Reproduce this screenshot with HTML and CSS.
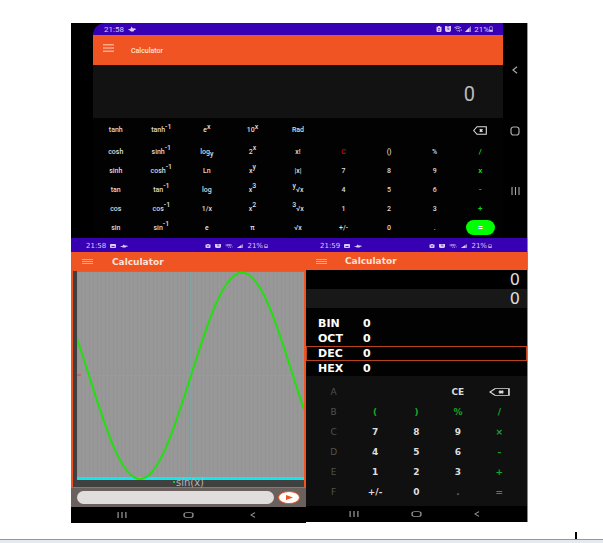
FILE: index.html
```html
<!DOCTYPE html>
<html lang="en">
<head>
<meta charset="utf-8">
<title>Calculator</title>
<link rel="stylesheet" href="styles.css">
</head>
<body>
<svg class="defs" aria-hidden="true">
  <symbol id="menu" viewBox="0 0 12 8" preserveAspectRatio="none"><path d="M0 .8h12M0 4h12M0 7.2h12" stroke="currentColor" stroke-width="1.5"/></symbol>
  <symbol id="cloud" viewBox="0 0 8 6" preserveAspectRatio="none"><path d="M0 3.8Q1 2.6 2.2 3.2L3.6.6 4.8 2.4 7 2.2 8 3.6 6 4.2 5.6 5.4H2.8L2 4.4z" fill="currentColor"/></symbol>
  <symbol id="image" viewBox="0 0 7 6" preserveAspectRatio="none"><path d="M1 0h5q1 0 1 1v4q0 1-1 1H1Q0 6 0 5V1Q0 0 1 0zM1.2 4.5h4.6L4.5 2.8l-1 .9-.9-.6z" fill="currentColor" fill-rule="evenodd"/></symbol>
  <symbol id="recycle" viewBox="0 0 6 6" preserveAspectRatio="none"><path d="M2 0h2v.8h1.5v4.4L4.8 6H1.2l-.7-.8V.8H2zM2.2 2v.8h1.6V2zM2 3.8v.7h2v-.7z" fill="currentColor" fill-rule="evenodd"/></symbol>
  <symbol id="alarm" viewBox="0 0 6 6" preserveAspectRatio="none"><path d="M0 0h1.5l.5.5h2L4.500 0H6v4.500L5 6H1L0 4.500zM2.600 1.500v2h1.900v-.7H3.300V1.500z" fill="currentColor" fill-rule="evenodd"/></symbol>
  <symbol id="wifi" viewBox="0 0 8 6" preserveAspectRatio="none"><path d="M.4 1.700Q3.600-.6 7 1.700M1.500 3Q3.700 1.300 5.700 3M2.800 4.200l1 1 .8-1M5.500 4.300v1.500M7.200 3.500v1.500" fill="none" stroke="currentColor" stroke-width=".8"/></symbol>
  <symbol id="signal" viewBox="0 0 6 6" preserveAspectRatio="none"><path d="M0 6 6 0v6z" fill="currentColor" opacity=".65"/><path d="M0 6 4 2v4z" fill="currentColor"/></symbol>
  <symbol id="battery" viewBox="0 0 4 6" preserveAspectRatio="none"><path d="M1.300.3h1.400v.8h.8v4.500h-3V1.100h.8z" fill="none" stroke="currentColor" stroke-width=".5"/><path d="M.5 3.800h3v1.800h-3z" fill="currentColor"/></symbol>
  <symbol id="erase" viewBox="0 0 14 9" preserveAspectRatio="none"><path d="M4 .7h9.300v7.600H4L.7 4.500z" fill="none" stroke="currentColor" stroke-width="1.100"/><path d="M6.800 3.200l2.600 2.600M6.800 5.800l2.600-2.600" stroke="currentColor" stroke-width="1.500"/></symbol>
  <symbol id="back" viewBox="0 0 6 8" preserveAspectRatio="none"><path d="M5 .8 1 4l4 3.200" fill="none" stroke="currentColor" stroke-width="1.200"/></symbol>
  <symbol id="home" viewBox="0 0 10 10" preserveAspectRatio="none"><rect x="1" y="1" width="8" height="8" rx="2.500" fill="none" stroke="currentColor" stroke-width="1.200"/></symbol>
  <symbol id="recent" viewBox="0 0 9 8" preserveAspectRatio="none"><path d="M1 0v8M4.500 0v8M8 0v8" stroke="currentColor" stroke-width="1.100"/></symbol>
</svg>

<main class="collage">
  <section class="wide">
    <div class="screen">
      <div class="status">
        <span>21:58</span><svg class="ic w8"><use href="#cloud"/></svg>
        <span class="tray"><svg class="ic w6"><use href="#recycle"/></svg><svg class="ic w6"><use href="#alarm"/></svg><svg class="ic w8"><use href="#wifi"/></svg><svg class="ic w6"><use href="#signal"/></svg><span>21%</span><svg class="ic w4"><use href="#battery"/></svg></span>
      </div>
      <header class="bar"><button class="menu" aria-label="Menu"><svg><use href="#menu"/></svg></button><h1>Calculator</h1></header>
      <output class="result">0</output>
      <div class="keys">
        <button>tanh</button><button>tanh<sup>-1</sup></button><button><i>e</i><sup>x</sup></button><button>10<sup>x</sup></button><button>Rad</button><span></span><span></span><span></span><button aria-label="Delete"><svg class="erase"><use href="#erase"/></svg></button>
        <button>cosh</button><button>sinh<sup>-1</sup></button><button>log<sub>y</sub></button><button>2<sup>x</sup></button><button>x!</button><button class="red">C</button><button>()</button><button>%</button><button class="op">/</button>
        <button>sinh</button><button>cosh<sup>-1</sup></button><button>Ln</button><button>x<sup>y</sup></button><button>|x|</button><button>7</button><button>8</button><button>9</button><button class="op">x</button>
        <button>tan</button><button>tan<sup>-1</sup></button><button>log</button><button>x<sup>3</sup></button><button><sup>y</sup>√x</button><button>4</button><button>5</button><button>6</button><button class="op">-</button>
        <button>cos</button><button>cos<sup>-1</sup></button><button>1/x</button><button>x<sup>2</sup></button><button><sup>3</sup>√x</button><button>1</button><button>2</button><button>3</button><button class="op">+</button>
        <button>sin</button><button>sin<sup>-1</sup></button><button class="euler">e</button><button>π</button><button>√x</button><button>+/-</button><button>0</button><button>.</button><button class="equals">=</button>
      </div>
    </div>
    <nav class="side">
      <button aria-label="Back"><svg class="back"><use href="#back"/></svg></button>
      <button aria-label="Home"><svg class="home"><use href="#home"/></svg></button>
      <button aria-label="Recent apps"><svg class="recent"><use href="#recent"/></svg></button>
    </nav>
  </section>

  <div class="pair">
    <section class="phone">
      <div class="status">
        <span>21:58</span><svg class="ic w6"><use href="#image"/></svg><svg class="ic w8"><use href="#cloud"/></svg>
        <span class="tray"><svg class="ic w6"><use href="#recycle"/></svg><svg class="ic w6"><use href="#alarm"/></svg><svg class="ic w8"><use href="#wifi"/></svg><svg class="ic w6"><use href="#signal"/></svg><span>21%</span><svg class="ic w4"><use href="#battery"/></svg></span>
      </div>
      <header class="bar"><button class="menu" aria-label="Menu"><svg><use href="#menu"/></svg></button><h1>Calculator</h1></header>
      <figure class="graph">
        <svg class="plot" viewBox="0 0 227 209" preserveAspectRatio="none" role="img" aria-label="Sine curve">
          <defs><pattern id="rules" width="4" height="209" patternUnits="userSpaceOnUse"><path d="M.5 0v209" stroke="#949494" stroke-width="1"/></pattern></defs>
          <rect width="227" height="209" fill="#989898"/>
          <rect width="227" height="209" fill="url(#rules)"/>
          <path d="M113.500 0v209M0 104.500h227" stroke="#84a4a4" stroke-width="1"/>
          <path d="M0 .5h227" stroke="#708888" stroke-width="1"/>
          <path d="M0 104h4" stroke="#c66" stroke-width="2"/>
          <path d="M0 207.500h227" stroke="#14e6f0" stroke-width="3"/>
          <path d="M-39 1.500C-20.500 1.500-4.600 51.800 12 104.500C28.600 157.200 44.500 208 63 208C81.500 208 97.400 157.200 114 104.500C130.600 51.800 146.500 1.500 165 1.500C183.500 1.500 199.400 51.800 216 104.500C232.600 157.200 248.500 208 267 208" fill="none" stroke="#22e00f" stroke-width="2"/>
        </svg>
        <figcaption><span class="dot"></span>sin(x)</figcaption>
      </figure>
      <form class="entry">
        <input type="text" aria-label="Function">
        <button type="button" aria-label="Plot"><svg viewBox="0 0 8 6" preserveAspectRatio="none"><path d="M0 0 8 3 0 6z" fill="#f05423"/></svg></button>
      </form>
      <nav class="bottom">
        <button aria-label="Recent apps"><svg class="recent"><use href="#recent"/></svg></button>
        <button aria-label="Home"><svg class="home"><use href="#home"/></svg></button>
        <button aria-label="Back"><svg class="back"><use href="#back"/></svg></button>
      </nav>
    </section>

    <section class="phone programmer">
      <div class="status">
        <span>21:59</span><svg class="ic w6"><use href="#image"/></svg><svg class="ic w8"><use href="#cloud"/></svg>
        <span class="tray"><svg class="ic w6"><use href="#recycle"/></svg><svg class="ic w6"><use href="#alarm"/></svg><svg class="ic w8"><use href="#wifi"/></svg><svg class="ic w6"><use href="#signal"/></svg><span>21%</span><svg class="ic w4"><use href="#battery"/></svg></span>
      </div>
      <header class="bar"><button class="menu" aria-label="Menu"><svg><use href="#menu"/></svg></button><h1>Calculator</h1></header>
      <output class="line">0</output>
      <output class="line current">0</output>
      <dl class="bases">
        <div><dt>BIN</dt><dd>0</dd></div>
        <div><dt>OCT</dt><dd>0</dd></div>
        <div class="active"><dt>DEC</dt><dd>0</dd></div>
        <div><dt>HEX</dt><dd>0</dd></div>
      </dl>
      <div class="pad">
        <button disabled>A</button><span></span><span></span><button>CE</button><button aria-label="Delete"><svg class="erase"><use href="#erase"/></svg></button>
        <button disabled>B</button><button class="op">(</button><button class="op">)</button><button class="op">%</button><button class="op">/</button>
        <button disabled>C</button><button>7</button><button>8</button><button>9</button><button class="op">×</button>
        <button disabled>D</button><button>4</button><button>5</button><button>6</button><button class="op">-</button>
        <button disabled>E</button><button>1</button><button>2</button><button>3</button><button class="op">+</button>
        <button disabled>F</button><button>+/-</button><button>0</button><button class="faint">.</button><button class="op">=</button>
      </div>
      <nav class="bottom">
        <button aria-label="Recent apps"><svg class="recent"><use href="#recent"/></svg></button>
        <button aria-label="Home"><svg class="home"><use href="#home"/></svg></button>
        <button aria-label="Back"><svg class="back"><use href="#back"/></svg></button>
      </nav>
    </section>
  </div>
</main>
<footer class="edge"><span class="caret"></span></footer>
</body>
</html>
```
FILE: styles.css
```css
* { box-sizing: border-box; }
body {
  margin: 0;
  min-height: 100vh;
  display: flex;
  flex-direction: column;
  background: #fff;
  color: #ddd;
  font-family: Roboto, sans-serif;
}
.defs { position: absolute; width: 0; height: 0; }
button {
  margin: 0;
  padding: 0;
  border: 0;
  background: none;
  color: inherit;
  font: inherit;
  display: flex;
  align-items: center;
  justify-content: center;
}
svg { display: block; }
h1 { margin: 0; font-weight: 500; }
.collage { padding: 23px 75px 0 71px; }

.status {
  display: flex;
  align-items: center;
  gap: 4px;
  background: #3700b3;
  color: #d8cef4;
}
.tray { margin-left: auto; display: flex; align-items: center; gap: 4px; }
.ic { height: 6px; }
.w4 { width: 4px; margin-left: -3px; }
.w6 { width: 6px; }
.w8 { width: 8px; }
.bar { display: flex; align-items: center; background: #f05423; color: #fde4da; }
.menu { color: #f9a88c; }

/* Landscape scientific calculator */
.wide { display: flex; background: #000; border-right: 1px solid #999; }
.screen { flex: 1; margin-left: 22px; }
.wide .status { height: 12px; padding: 0 10px 0 11px; border-top-left-radius: 12px; font-size: 8px; }
.wide .tray { gap: 3px; }
.wide .bar { height: 30px; padding-left: 10px; gap: 17px; }
.wide .bar h1 { font-size: 7px; padding-top: 2px; }
.wide .menu { margin-bottom: 5px; }
.wide .menu svg { width: 11px; height: 8px; }
.result {
  display: flex;
  align-items: center;
  justify-content: flex-end;
  height: 53px;
  padding: 4px 28px 0 0;
  background: #121212;
  color: #bbb;
  font-size: 20px;
}
.keys {
  display: grid;
  grid-template-columns: repeat(9, 1fr);
  grid-template-rows: 24px repeat(5, 19px);
  padding-bottom: 1px;
  font-size: 7px;
  font-weight: 500;
  background: #020202;
  border-bottom-left-radius: 12px;
}
.keys > * { display: flex; align-items: center; justify-content: center; }
.keys sup, .keys sub { font-size: 7px; line-height: 7px; }
.keys sup { align-self: flex-start; margin-top: 3px; }
.keys sub { align-self: flex-end; margin-bottom: 3px; }
.keys button:nth-child(-n+5) sup { margin-top: 6px; }
.keys .red { color: #c01010; }
.keys .op { color: #0fd30f; font-size: 8px; font-weight: 700; }
.keys i { font-weight: 700; }
.keys .euler { font-style: italic; font-weight: 700; }
.keys .equals {
  justify-self: center;
  align-self: center;
  width: 29px;
  height: 15px;
  border-radius: 8px;
  background: #00ff00;
  color: #fff;
  font-size: 9px;
  font-weight: 700;
}
.wide .erase { width: 14px; height: 9px; }
.side {
  width: 24px;
  display: flex;
  flex-direction: column;
  align-items: center;
  justify-content: space-between;
  padding: 43px 0;
  color: #aaa;
}
.side .back { width: 6px; height: 8px; }
.side .home { width: 10px; height: 10px; }
.side .recent { width: 9px; height: 8px; }

/* Portrait calculators */
.pair {
  display: grid;
  grid-template-columns: 235fr 222fr;
  align-items: start;
  font-family: "DejaVu Sans", sans-serif;
}
.pair .status { height: 14px; padding: 2px 38px 0 15px; font-size: 7px; }
.pair .ic { height: 4px; }
.pair .bar { height: 19px; padding-left: 11px; gap: 19px; }
.pair .bar h1 { font-size: 9px; font-weight: 700; }
.pair .menu svg { width: 11px; height: 5px; }

.graph { margin: 0; border: solid #f05423; border-width: 0 2px 1px; background: #404040; }
.plot { width: calc(100% - 4px); height: 209px; margin-left: 4px; }
.graph figcaption {
  display: flex;
  justify-content: center;
  height: 7px;
  font-size: 10px;
  line-height: 6px;
  color: #b4b4b4;
}
.dot { width: 2px; height: 2px; margin: 1px 1px 0 0; background: #19c819; }
.entry {
  display: flex;
  align-items: center;
  gap: 4px;
  height: 19px;
  padding: 0 6px;
  background: #6a605e;
}
.entry input {
  flex: 1;
  min-width: 0;
  height: 13px;
  border: 0;
  border-radius: 7px;
  background: #e0dddd;
}
.entry button {
  width: 22px;
  height: 13px;
  border: 1px solid #f05423;
  border-radius: 50%;
  background: #fff;
}
.entry button svg { width: 7px; height: 5px; }
.bottom {
  display: flex;
  align-items: center;
  justify-content: space-between;
  height: 16px;
  padding: 0 50px 0 46px;
  background: #000;
  color: #999;
}
.bottom .recent { width: 10px; height: 6px; }
.bottom .home { width: 11px; height: 6px; }
.bottom .back { width: 6px; height: 6px; }

.programmer { background: #020202; border-right: 1px solid #888; }
.programmer .status { padding: 2px 35px 0 14px; }
.programmer .bar { height: 18px; padding-left: 10px; gap: 18px; }
.line {
  display: flex;
  align-items: center;
  justify-content: flex-end;
  height: 19px;
  padding-right: 7px;
  background: #000;
  font-size: 16px;
}
.current { background: #181818; }
.bases { margin: 0; padding: 8px 0 0; height: 68px; font-size: 11px; font-weight: 700; color: #fff; }
.bases div { display: flex; align-items: center; height: 15px; padding-left: 11px; border: 1px solid transparent; }
.bases .active { border-color: #b8431c; }
.bases dt { width: 45px; }
.bases dd { margin: 0; }
.pad {
  display: grid;
  grid-template-columns: repeat(5, 1fr);
  grid-auto-rows: 20px;
  height: 130px;
  padding: 6px 7px 4px;
  background: #101010;
  font-size: 9px;
  font-weight: 700;
}
.pad button:disabled { color: #505050; font-weight: 400; }
.pad .op { color: #16a82c; }
.pad .faint { color: #666; }
.pad .erase { width: 21px; height: 8px; }
.programmer .bottom { padding: 0 47px 0 43px; }

.edge {
  position: relative;
  margin-top: auto;
  height: 4px;
  border-top: 1px solid #8f98a8;
  background: #e6eaef;
}
.caret { position: absolute; right: 26px; bottom: 4px; width: 2px; height: 7px; background: #000; }
```
